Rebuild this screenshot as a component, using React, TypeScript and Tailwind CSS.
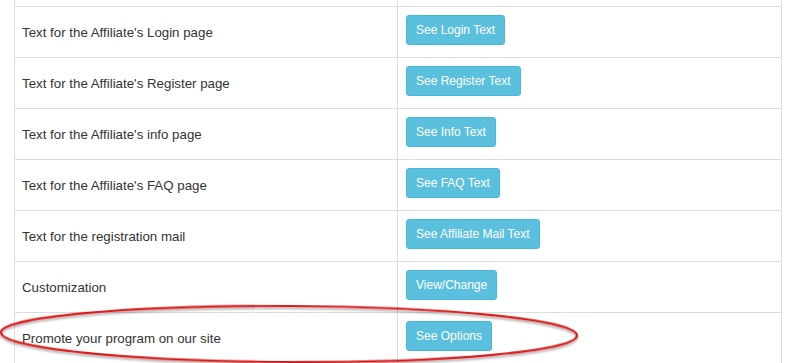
const rows = [
  { label: "", action: "" },
  { label: "Text for the Affiliate's Login page", action: "See Login Text" },
  { label: "Text for the Affiliate's Register page", action: "See Register Text" },
  { label: "Text for the Affiliate's info page", action: "See Info Text" },
  { label: "Text for the Affiliate's FAQ page", action: "See FAQ Text" },
  { label: "Text for the registration mail", action: "See Affiliate Mail Text" },
  { label: "Customization", action: "View/Change" },
  { label: "Promote your program on our site", action: "See Options" },
];

export default function App() {
  return (
    <div
      className="relative h-[363px] w-[795px] overflow-hidden bg-white text-[#333]"
      style={{ fontFamily: '"Liberation Sans", Arial, sans-serif' }}
    >
      {/* settings table */}
      <div className="ml-[14px] mt-[-45px] w-[768px] border-x border-[#ddd]">
        {rows.map((row, i) => (
          <div key={i} className="flex h-[51px] border-t border-[#ddd]">
            <div className="flex w-[383px] items-center border-r border-[#ddd] pl-[7px] pt-px text-[13.3px]">
              {row.label}
            </div>
            <div className="flex-1 pl-2 pt-2">
              {row.action && (
                <button className="h-[30px] rounded-[3px] border border-[#46b8da] bg-[#5bc0de] px-[9px] text-[12px] leading-none text-white">
                  {row.action}
                </button>
              )}
            </div>
          </div>
        ))}
      </div>

      {/* hand-drawn highlight */}
      <svg
        className="pointer-events-none absolute left-0 top-0"
        width="795"
        height="363"
        viewBox="0 0 795 363"
      >
        <defs>
          <filter id="shadow" x="-10%" y="-50%" width="120%" height="200%">
            <feDropShadow dx="0" dy="2" stdDeviation="1.2" floodColor="#000" floodOpacity="0.35" />
          </filter>
        </defs>
        <ellipse
          cx="289"
          cy="334"
          rx="288"
          ry="28"
          transform="rotate(0.3 289 334)"
          fill="none"
          stroke="#d81e1e"
          strokeWidth="2.2"
          filter="url(#shadow)"
        />
      </svg>
    </div>
  );
}
